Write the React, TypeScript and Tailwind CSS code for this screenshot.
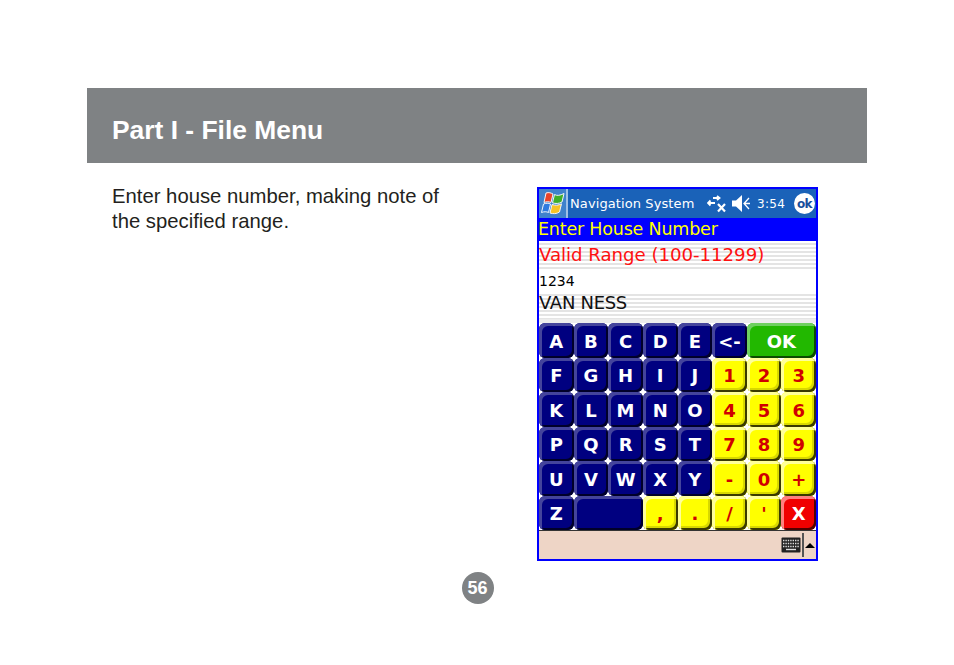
const keyStyles: Record<string, string> = {
  navy: "bg-[#000080] text-white shadow-[inset_3px_3px_0_#44449c,inset_-2px_-2px_0_#00002a]",
  yellow: "bg-[#ffff00] text-[#d00000] shadow-[inset_3px_3px_0_#ffff9a,inset_-2px_-2px_0_#3a3a00,inset_-4px_-4px_0_#d8d800]",
  green: "bg-[#22b800] text-white shadow-[inset_3px_3px_0_#6fd060,inset_-2px_-2px_0_#0c4a00]",
  red: "bg-[#f00000] text-white shadow-[inset_3px_3px_0_#ff8080,inset_-2px_-2px_0_#500000]",
};

type KeyDef = { label: string; kind: keyof typeof keyStyles; wide?: boolean };

const n = (label: string): KeyDef => ({ label, kind: "navy" });
const y = (label: string): KeyDef => ({ label, kind: "yellow" });

const keys: KeyDef[] = [
  n("A"), n("B"), n("C"), n("D"), n("E"), n("<-"), { label: "OK", kind: "green", wide: true },
  n("F"), n("G"), n("H"), n("I"), n("J"), y("1"), y("2"), y("3"),
  n("K"), n("L"), n("M"), n("N"), n("O"), y("4"), y("5"), y("6"),
  n("P"), n("Q"), n("R"), n("S"), n("T"), y("7"), y("8"), y("9"),
  n("U"), n("V"), n("W"), n("X"), n("Y"), y("-"), y("0"), y("+"),
  n("Z"), { label: "", kind: "navy", wide: true }, y(","), y("."), y("/"), y("'"), { label: "X", kind: "red" },
];

const linedBg =
  "bg-[repeating-linear-gradient(180deg,#ffffff_0,#ffffff_2px,#e4e4e4_2px,#e4e4e4_4px)]";

function WinFlag() {
  return (
    <svg width="25" height="25" viewBox="0 0 25 25" stroke="#f2f6fb" strokeWidth="1">
      <path d="M6 2 C9 1 11 2 13 3 L11 11.5 C9 10.5 6.5 10.5 4 11.5 Z" fill="#e8432a" />
      <path d="M14.5 3.5 C17 5 20 4.5 24 2.5 L22 11 C19 12.8 15.5 12.8 12.5 11.8 Z" fill="#3fae2a" />
      <path d="M3.5 13 C6 12 8.5 12 10.5 13 L8.5 21.5 C6.5 20.5 4 20.5 1.5 21.5 Z" fill="#2f7be0" />
      <path d="M12 13.5 C15 14.5 18.5 14.5 21.5 12.8 L19.5 21 C16.5 23 13 23 10 22 Z" fill="#f7c326" />
    </svg>
  );
}

function NetIcon() {
  return (
    <svg width="20" height="18" viewBox="0 0 20 18" fill="none" stroke="#fff" strokeWidth="1.8">
      <path d="M1 8h7M3.5 5.5 1 8l2.5 2.5" />
      <path d="M6 3h6M10 1l2.5 2L10 5" />
      <path d="M11 9l7 7.5M18 9l-7 7.5" strokeWidth="2.2" />
    </svg>
  );
}

function SpeakerIcon() {
  return (
    <svg width="19" height="17" viewBox="0 0 19 17" fill="#fff">
      <path d="M0 5.5h4l6-5.5v17l-6-5.5H0z" />
      <path d="M17 3l-5 5.5 5 5.5M12 8.5h6" fill="none" stroke="#fff" strokeWidth="1.3" />
    </svg>
  );
}

function KeyboardIcon() {
  return (
    <svg width="20" height="16" viewBox="0 0 20 16">
      <rect x="0.5" y="0.5" width="19" height="15" rx="1" fill="#222" />
      <path d="M2 3.5h16M2 6.5h16M2 9.5h16" stroke="#ddd" strokeWidth="1.4" strokeDasharray="1.4 1" />
      <path d="M5 12.5h10" stroke="#ddd" strokeWidth="1.4" />
    </svg>
  );
}

function Device() {
  return (
    <div className="w-[281px] h-[374px] border-2 border-[#0000ff] bg-white flex flex-col font-['DejaVu_Sans',sans-serif]">
      <div className="h-[29px] shrink-0 bg-[#1a62b8] flex items-center text-white">
        <div className="w-[29px] h-full flex items-center justify-center border-r-2 border-[#9fc0e6] bg-[#3f82cc]">
          <WinFlag />
        </div>
        <span className="ml-[2px] w-[125px] text-[13px] tracking-[0.1px] whitespace-nowrap">Navigation System</span>
        <span className="ml-[12px] flex items-center"><NetIcon /></span>
        <span className="ml-[5px] flex items-center"><SpeakerIcon /></span>
        <span className="ml-[6px] text-[12px] tracking-[0.3px]">3:54</span>
        <span className="ml-auto mr-[1px] w-[21px] h-[21px] rounded-full bg-white text-[#1a4f9c] text-[12px] font-bold flex items-center justify-center tracking-[-0.5px]">
          ok
        </span>
      </div>
      <div className="h-[23px] shrink-0 bg-[#0000ff] text-[#ffff00] text-[17.5px] leading-[22px] tracking-[-0.2px] whitespace-nowrap">
        <span className="-ml-[1px]">Enter House Number</span>
      </div>
      <div className={`${linedBg} h-[29px] shrink-0 text-[#ff1010] text-[18.2px] leading-[27px] tracking-[-0.05px] whitespace-nowrap`}>
        Valid Range (100-11299)
      </div>
      <div className="h-[22px] shrink-0 bg-white text-black text-[14px] leading-[23px]">1234</div>
      <div className={`${linedBg} h-[27px] shrink-0 text-[#111] text-[18px] leading-[22px] tracking-[-0.3px] whitespace-nowrap`}>
        VAN NESS
      </div>
      <div className="h-[4px] shrink-0 bg-[#ececec]" />
      <div className="h-[208px] shrink-0 grid grid-cols-8 grid-rows-6 bg-white border-b border-[#333] font-['DejaVu_Sans',sans-serif]">
        {keys.map((k, i) => (
          <div
            key={i}
            className={`${k.wide ? "col-span-2" : ""} ${keyStyles[k.kind]} rounded-[6px] flex items-center justify-center pt-[2px] text-[18px] font-bold`}
          >
            {k.label}
          </div>
        ))}
      </div>
      <div className="flex-1 bg-[#eed5c6] flex items-center justify-end">
        <KeyboardIcon />
        <span className="ml-[1px] w-[2px] h-[24px] bg-[#555]" />
        <span className="ml-[1px] mr-[1px] w-0 h-0 border-x-[5px] border-x-transparent border-b-[5px] border-b-black" />
      </div>
    </div>
  );
}

export default function App() {
  return (
    <div className="w-[954px] h-[665px] bg-white pt-[88px] font-['Liberation_Sans',sans-serif]">
      <header className="mx-[87px] w-[780px] h-[75px] bg-[#7f8284] pl-[25px] flex items-center">
        <h1 className="text-white text-[26.4px] font-bold leading-none pt-[10px]">Part I - File Menu</h1>
      </header>
      <div className="flex mt-[24px] pl-[112px]">
        <p className="w-[425px] pr-[70px] text-[#231f20] text-[20.3px] leading-[25px] -mt-[3px]">
          Enter house number, making note of the specified range.
        </p>
        <Device />
      </div>
      <div className="mt-[11px] flex justify-center">
        <div className="ml-[1px] w-[32px] h-[32px] rounded-full bg-[#7f8284] text-white text-[18px] font-bold flex items-center justify-center">
          56
        </div>
      </div>
    </div>
  );
}
